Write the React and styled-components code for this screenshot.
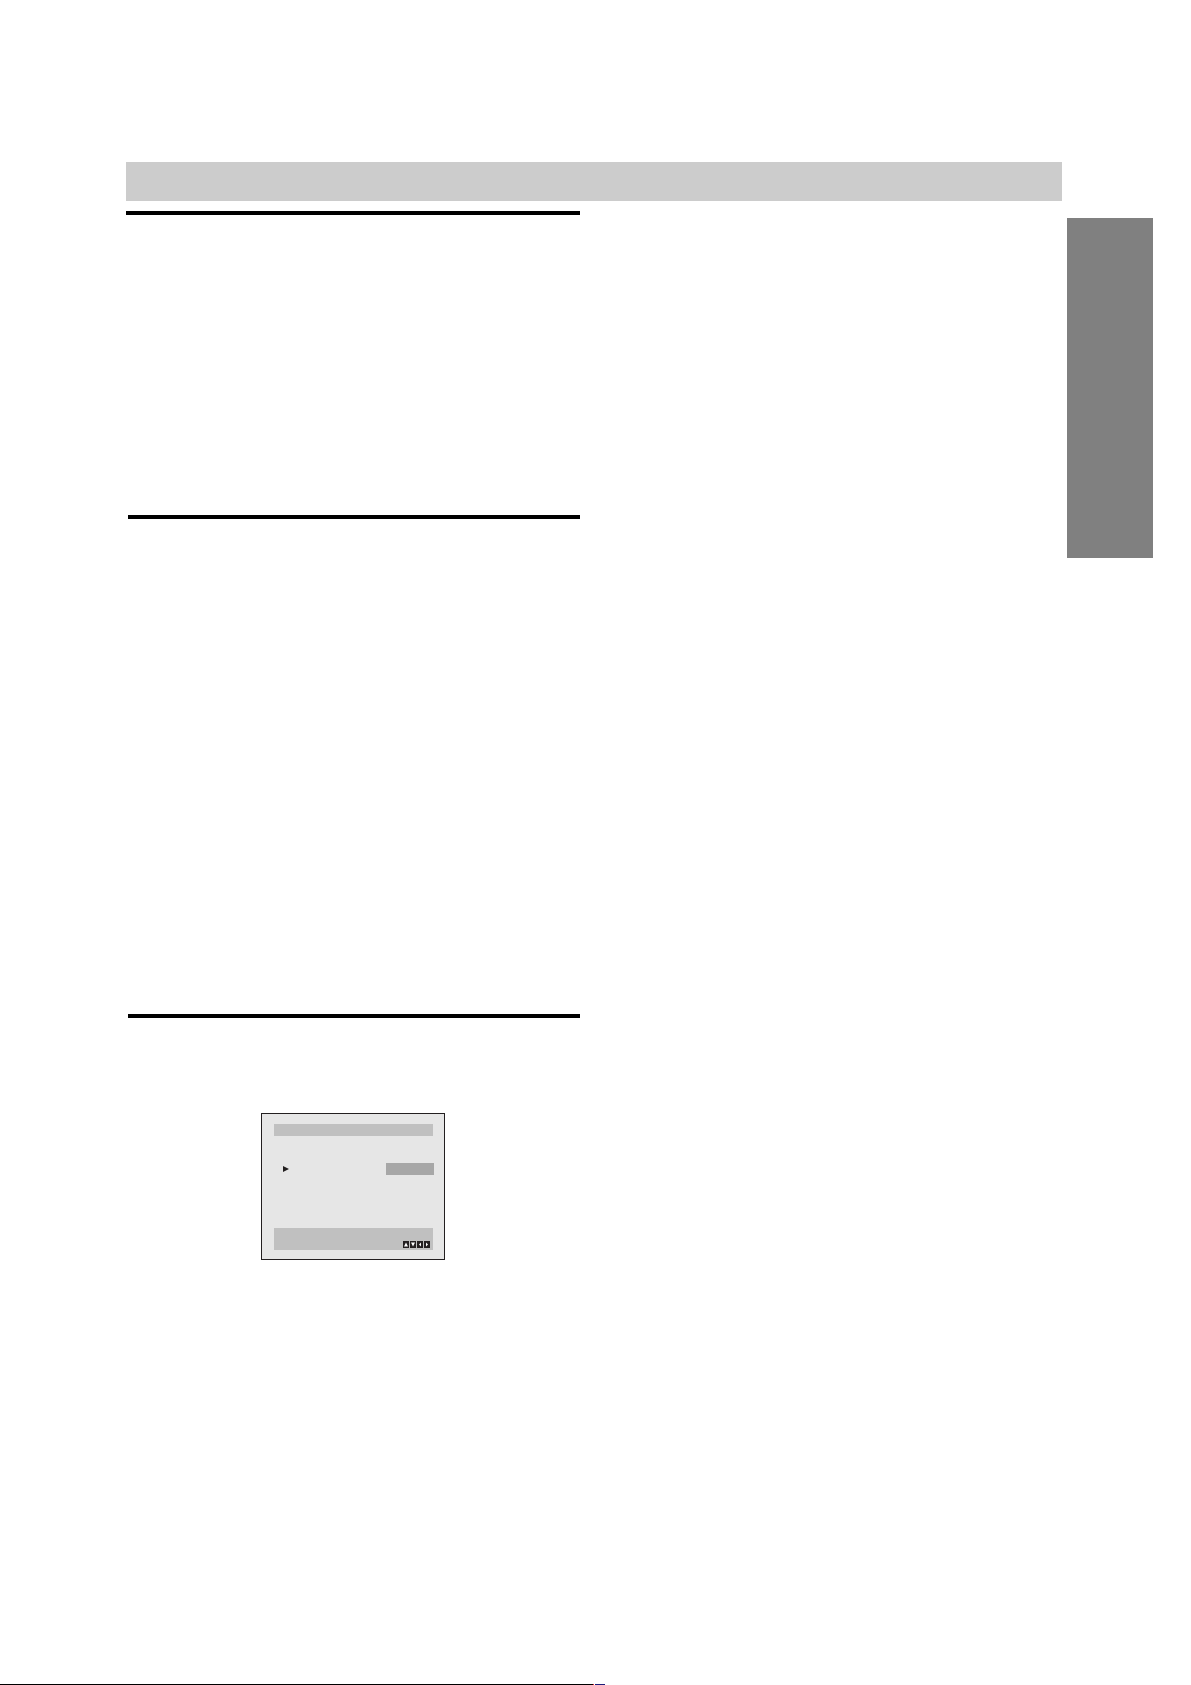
import React from 'react';
import styled, { createGlobalStyle } from 'styled-components';

const GlobalStyle = createGlobalStyle`
  html, body {
    margin: 0;
    padding: 0;
    background: #ffffff;
    font-family: "Liberation Sans", Arial, sans-serif;
  }
`

const Page = styled.div`
  width: 1191px;
  min-height: 1685px;
  display: flex;
  flex-direction: column;
  padding-top: 162px;
  box-sizing: border-box;
`

const TitleBar = styled.div`
  margin-left: 126px;
  width: 936px;
  height: 39px;
  background: #cccccc;
`

const Body = styled.div`
  display: flex;
  padding-left: 126px;
  margin-top: 10px;
`

const Column = styled.div`
  width: 454px;
  display: flex;
  flex-direction: column;
`

const Rule = styled.div`
  height: 4px;
  background: #000;
  margin-top: ${p => p.$gap || 0}px;
  margin-left: ${p => p.$indent || 0}px;
`

const SideTab = styled.div`
  margin-left: auto;
  margin-right: 38px;
  margin-top: 7px;
  width: 86px;
  height: 340px;
  background: #808080;
`

const Screen = styled.div`
  margin-top: 95px;
  margin-left: 135px;
  width: 184px;
  height: 147px;
  box-sizing: border-box;
  border: 1px solid #231f20;
  background: #e6e6e6;
  padding: 10px 10px 9px 12px;
  display: flex;
  flex-direction: column;
`

const ScreenTitle = styled.div`
  height: 12px;
  width: 159px;
  background: #c0c0c0;
`

const MenuRow = styled.div`
  margin-top: 27px;
  height: 12px;
  display: flex;
  align-items: center;
  justify-content: space-between;
`

const Cursor = styled.div`
  margin-left: 9px;
  width: 0;
  height: 0;
  border-top: 3.5px solid transparent;
  border-bottom: 3.5px solid transparent;
  border-left: 6px solid #231f20;
`

const ValueBox = styled.div`
  width: 48px;
  height: 12px;
  background: #a7a7a7;
`

const HelpBar = styled.div`
  margin-top: auto;
  height: 22px;
  width: 159px;
  background: #c0c0c0;
  display: flex;
  justify-content: flex-end;
  align-items: flex-end;
  padding: 0 3px 2px 0;
  box-sizing: border-box;
`

const Footer = styled.div`
  margin-top: auto;
  height: 1px;
  display: flex;
`

const FooterLine = styled.div`
  width: 593px;
  background: #000;
`

const Mark = styled.div`
  width: ${p => p.$w}px;
  margin-left: ${p => p.$gap || 0}px;
  background: ${p => p.$color};
`

const NavKeys = () => (
  <svg width="27" height="7" viewBox="0 0 27 7">
    <rect x="0" y="0" width="6" height="7" fill="#231f20" />
    <polygon points="1,5.5 5,5.5 3,1.5" fill="#fff" />
    <rect x="7" y="0" width="6" height="7" fill="#231f20" />
    <polygon points="8,1.5 12,1.5 10,5.5" fill="#fff" />
    <rect x="14" y="0" width="6" height="7" fill="#231f20" />
    <polygon points="18,1.5 18,5.5 16,3.5" fill="#fff" />
    <rect x="21" y="0" width="6" height="7" fill="#231f20" />
    <polygon points="23,1.5 23,5.5 25,3.5" fill="#fff" />
  </svg>
)

export default function App() {
  return (
    <>
      <GlobalStyle />
      <Page>
        <TitleBar />
        <Body>
          <Column>
            <Rule />
            <Rule $gap={300} $indent={2} />
            <Rule $gap={495} $indent={2} />
            <Screen>
              <ScreenTitle />
              <MenuRow>
                <Cursor />
                <ValueBox />
              </MenuRow>
              <HelpBar>
                <NavKeys />
              </HelpBar>
            </Screen>
          </Column>
          <SideTab />
        </Body>
        <Footer>
          <FooterLine />
          <Mark $w={1} $color="#e0202a" />
          <Mark $w={10} $gap={1} $color="#1d1d7a" />
        </Footer>
      </Page>
    </>
  );
}
